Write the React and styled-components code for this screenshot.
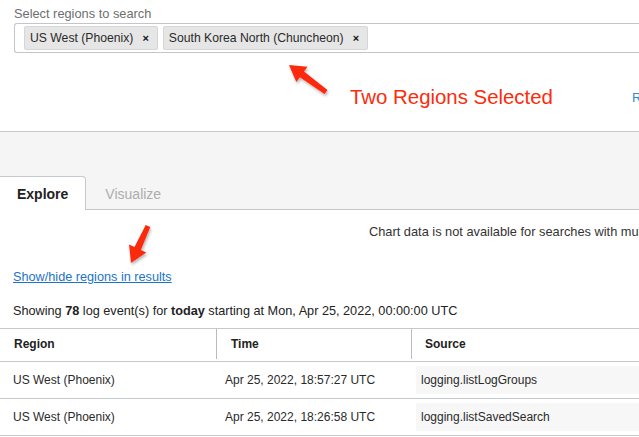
import React from 'react';
import styled, { createGlobalStyle } from 'styled-components';

const GlobalStyle = createGlobalStyle`
    html, body {
        margin: 0;
        padding: 0;
        background: #ffffff;
    }
    body {
        font-family: "Liberation Sans", Helvetica, Arial, sans-serif;
        color: #222;
    }
`;

const Viewport = styled.div`
    position: relative;
    width: 639px;
    height: 437px;
    overflow: hidden;
`;

const Page = styled.div`
    width: 760px;
`;

const SearchPanel = styled.div`
    padding: 6px 0 0 14px;
`;

const FieldLabel = styled.div`
    font-size: 12.8px;
    line-height: 16px;
    color: #6e6e6e;
`;

const TagInput = styled.div`
    margin-top: 1px;
    height: 30px;
    box-sizing: border-box;
    display: flex;
    align-items: center;
    gap: 5px;
    padding: 0 9px;
    border: 1px solid #c3c5cc;
    border-right: none;
    border-radius: 3px 0 0 3px;
`;

const Chip = styled.span`
    display: inline-flex;
    align-items: center;
    height: 24px;
    box-sizing: border-box;
    padding: 0 8px 0 5px;
    background: #e6e6e6;
    border: 1px solid #d6d6d6;
    border-radius: 2px;
    font-size: 12.2px;
    color: #2a2a2a;
    white-space: nowrap;
`;

const ChipRemove = styled.span`
    margin-left: 9px;
    font-size: 11px;
    font-weight: bold;
    color: #111;
`;

const ActionsRow = styled.div`
    height: 78px;
    box-sizing: border-box;
    padding: 10px 0 0 350px;
    display: flex;
    align-items: center;
`;

const Callout = styled.span`
    font-size: 20.4px;
    color: #fb2c0c;
    white-space: nowrap;
`;

const EdgeLink = styled.span`
    margin-left: 79px;
    font-size: 13px;
    color: #2f8ae0;
`;

const TabBand = styled.div`
    height: 79px;
    box-sizing: border-box;
    background: #f5f5f5;
    border-top: 1px solid #c6c8cf;
    border-bottom: 1px solid #c6c8cf;
    display: flex;
    align-items: flex-end;
`;

const Tab = styled.div`
    height: 34px;
    box-sizing: border-box;
    margin-bottom: -1px;
    padding: 0 ${p => (p.$active ? '17px' : '19px')};
    display: flex;
    align-items: center;
    font-size: 14px;
    font-weight: ${p => (p.$active ? 'bold' : 'normal')};
    color: ${p => (p.$active ? '#222' : '#adadad')};
    background: ${p => (p.$active ? '#ffffff' : 'transparent')};
    border-top: 1px solid ${p => (p.$active ? '#c6c8cf' : 'transparent')};
    border-right: 1px solid ${p => (p.$active ? '#c6c8cf' : 'transparent')};
    border-top-right-radius: 4px;
`;

const ChartNote = styled.div`
    margin-top: 14px;
    padding-left: 369px;
    font-size: 12.8px;
    line-height: 16px;
    color: #333;
    white-space: nowrap;
`;

const ResultsLink = styled.a`
    display: block;
    margin: 29px 0 0 13px;
    font-size: 12.7px;
    line-height: 16px;
    color: #1b74c8;
    text-decoration: underline;
`;

const Summary = styled.div`
    margin: 18px 0 0 13px;
    font-size: 12.7px;
    line-height: 16px;
    color: #222;
    white-space: nowrap;
`;

const Table = styled.div`
    margin-top: 9px;
    border-top: 1px solid #c6c8cf;
`;

const HeaderRow = styled.div`
    display: grid;
    grid-template-columns: 216px 195px 1fr;
    padding-bottom: 2px;
    border-bottom: 1px solid #c6c8cf;
`;

const HeaderCell = styled.div`
    height: 30px;
    display: flex;
    align-items: center;
    padding-left: ${p => p.$pad}px;
    border-left: 1px solid ${p => (p.$divider ? '#b9bbc2' : 'transparent')};
    font-size: 12px;
    font-weight: bold;
    color: #222;
`;

const Row = styled.div`
    display: grid;
    grid-template-columns: 216px 195px 1fr;
    height: 37px;
    box-sizing: border-box;
    border-bottom: 1px solid #c6c8cf;
    font-size: 12px;
    color: #2a2a2a;
`;

const Cell = styled.div`
    display: flex;
    align-items: center;
    padding-left: ${p => p.$pad}px;
    white-space: nowrap;
`;

const SourceCell = styled.div`
    padding: 4px 0 4px 5px;
    display: flex;
`;

const SourceValue = styled.div`
    flex: 1;
    display: flex;
    align-items: center;
    padding-left: 5px;
    background: #f7f7f7;
`;

const ArrowLayer = styled.svg`
    position: absolute;
    left: 0;
    top: 0;
    pointer-events: none;
    overflow: visible;
`;

function arrowPoints(from, to, shaft, headW, headL) {
    const dx = to[0] - from[0];
    const dy = to[1] - from[1];
    const len = Math.hypot(dx, dy);
    const ux = dx / len;
    const uy = dy / len;
    const nx = -uy;
    const ny = ux;
    const neck = [to[0] - ux * headL, to[1] - uy * headL];
    const pt = (base, w) => `${base[0] + nx * w},${base[1] + ny * w}`;
    return [
        pt(from, shaft / 2 - 1),
        pt(neck, shaft / 2),
        pt(neck, headW / 2),
        `${to[0]},${to[1]}`,
        pt(neck, -headW / 2),
        pt(neck, -shaft / 2),
        pt(from, -(shaft / 2 - 1))
    ].join(' ');
}

const arrows = [
    { from: [326, 92], to: [289, 65] },
    { from: [148, 226], to: [131, 263] }
];

const rows = [
    { region: 'US West (Phoenix)', time: 'Apr 25, 2022, 18:57:27 UTC', source: 'logging.listLogGroups' },
    { region: 'US West (Phoenix)', time: 'Apr 25, 2022, 18:26:58 UTC', source: 'logging.listSavedSearch' }
];

export default function App() {
    return (
        <Viewport>
            <GlobalStyle />
            <Page>
                <SearchPanel>
                    <FieldLabel>Select regions to search</FieldLabel>
                    <TagInput>
                        <Chip>US West (Phoenix)<ChipRemove>×</ChipRemove></Chip>
                        <Chip>South Korea North (Chuncheon)<ChipRemove>×</ChipRemove></Chip>
                    </TagInput>
                </SearchPanel>
                <ActionsRow>
                    <Callout>Two Regions Selected</Callout>
                    <EdgeLink>Reset</EdgeLink>
                </ActionsRow>
                <TabBand>
                    <Tab $active>Explore</Tab>
                    <Tab>Visualize</Tab>
                </TabBand>
                <ChartNote>Chart data is not available for searches with multiple regions.</ChartNote>
                <ResultsLink href="#">Show/hide regions in results</ResultsLink>
                <Summary>
                    Showing <b>78</b> log event(s) for <b>today</b> starting at Mon, Apr 25, 2022, 00:00:00 UTC
                </Summary>
                <Table>
                    <HeaderRow>
                        <HeaderCell $pad={13}>Region</HeaderCell>
                        <HeaderCell $pad={14} $divider>Time</HeaderCell>
                        <HeaderCell $pad={13} $divider>Source</HeaderCell>
                    </HeaderRow>
                    {rows.map((r, i) => (
                        <Row key={i}>
                            <Cell $pad={13}>{r.region}</Cell>
                            <Cell $pad={9}>{r.time}</Cell>
                            <SourceCell>
                                <SourceValue>{r.source}</SourceValue>
                            </SourceCell>
                        </Row>
                    ))}
                </Table>
            </Page>
            <ArrowLayer width="639" height="437">
                <defs>
                    <filter id="arrowShadow" x="-50%" y="-50%" width="200%" height="200%">
                        <feDropShadow dx="1" dy="2" stdDeviation="1.5" floodColor="#000" floodOpacity="0.3" />
                    </filter>
                </defs>
                {arrows.map((a, i) => (
                    <polygon
                        key={i}
                        points={arrowPoints(a.from, a.to, 7, 19, 16)}
                        fill="#fb2c0c"
                        filter="url(#arrowShadow)" />
                ))}
            </ArrowLayer>
        </Viewport>
    );
}
